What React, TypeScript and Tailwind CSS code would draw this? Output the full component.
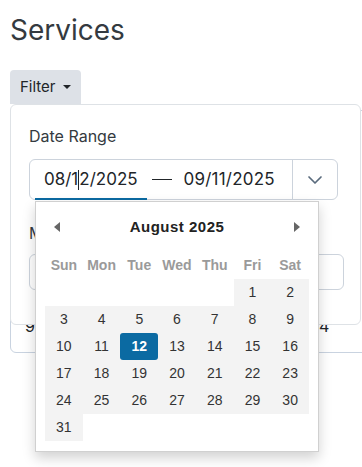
import { ChevronDown } from 'lucide-react';

const days = ['Sun', 'Mon', 'Tue', 'Wed', 'Thu', 'Fri', 'Sat'];
const cells: (number | null)[] = [null, null, null, null, null, ...Array.from({ length: 31 }, (_, i) => i + 1)];

const App = () => {
  return (
    <div className="relative w-[362px] h-[467px] overflow-hidden bg-white font-['Inter',sans-serif] text-[#212529]">
      <div className="px-[10px] pt-[12px]">
        <h1 className="text-[28px] leading-[36px] font-normal text-[#343a40]">Services</h1>
        <button className="mt-[22px] h-[34px] px-[10px] flex items-center gap-[7px] bg-[#dde1e7] rounded-t-[4px] text-[15px] text-[#212529]">
          Filter
          <span className="w-0 h-0 border-x-[4px] border-x-transparent border-t-[4px] border-t-[#212529]" />
        </button>
        <div className="mt-[6px] h-[243px] w-[400px] border border-[#c9d3e0] rounded-[6px] flex items-end pb-[14px] px-[14px]">
          <span className="text-[16px] text-[#212529]">9</span>
          <span className="ml-[284px] text-[16px] text-[#212529]">4</span>
        </div>
      </div>

      <div className="absolute left-[10px] top-[104px] w-[351px] h-[221px] bg-white border border-[#dee2e6] rounded-[6px] px-[18px] pt-[20px]">
        <p className="text-[16px] leading-[22px] text-[#343a40]">Date Range</p>
        <div className="mt-[12px] flex h-[41px] w-[309px] border border-[#ccd3dc] rounded-[6px]">
          <div className="relative flex-1 flex items-center pl-[14px] text-[17px] text-[#212529]">
            <span>08/1</span>
            <span className="w-px h-[20px] bg-[#212529]" />
            <span>2/2025</span>
            <span className="ml-[14px] w-[20px] h-px bg-[#212529]" />
            <span className="ml-[12px] tracking-[0.2px]">09/11/2025</span>
            <span className="absolute left-[5px] -bottom-px w-[112px] h-[2px] bg-[#0b6aa2]" />
          </div>
          <div className="w-[45px] border-l border-[#ccd3dc] flex items-center justify-center">
            <ChevronDown size={24} strokeWidth={1.7} className="text-[#5a6b7d]" />
          </div>
        </div>
        <p className="mt-[22px] text-[16px] leading-[22px] text-[#343a40]">Method</p>
        <div className="mt-[10px] h-[36px] w-[315px] border border-[#ccd3dc] rounded-[6px]" />
      </div>

      <div className="absolute left-[35px] top-[201px] w-[284px] h-[251px] bg-white border border-[#d0d0d0] shadow-[0_6px_12px_rgba(0,0,0,0.18)] font-['Liberation_Sans',Arial,sans-serif]">
        <div className="h-[50px] flex items-center justify-between px-[18px]">
          <span className="w-0 h-0 border-y-[5px] border-y-transparent border-r-[6px] border-r-[#666]" />
          <span className="text-[15px] font-bold tracking-[0.5px] text-[#222]">August 2025</span>
          <span className="w-0 h-0 border-y-[5px] border-y-transparent border-l-[6px] border-l-[#666]" />
        </div>
        <div className="ml-[9px] w-[264px] grid grid-cols-7">
          {days.map((d) => (
            <div key={d} className="h-[27px] flex items-center justify-center text-[14px] font-bold text-[#9a9a9a]">{d}</div>
          ))}
          {cells.map((n, i) =>
            n === null ? (
              <div key={i} className="h-[27px]" />
            ) : n === 12 ? (
              <div key={i} className="h-[27px] bg-[#f3f3f3] flex">
                <div className="flex-1 flex items-center justify-center bg-[#0b6aa2] rounded-[3px] text-white font-bold text-[14px]">12</div>
              </div>
            ) : (
              <div key={i} className="h-[27px] bg-[#f3f3f3] flex items-center justify-center text-[14px] text-[#333]">{n}</div>
            )
          )}
        </div>
      </div>
    </div>
  );
};

export default App;
